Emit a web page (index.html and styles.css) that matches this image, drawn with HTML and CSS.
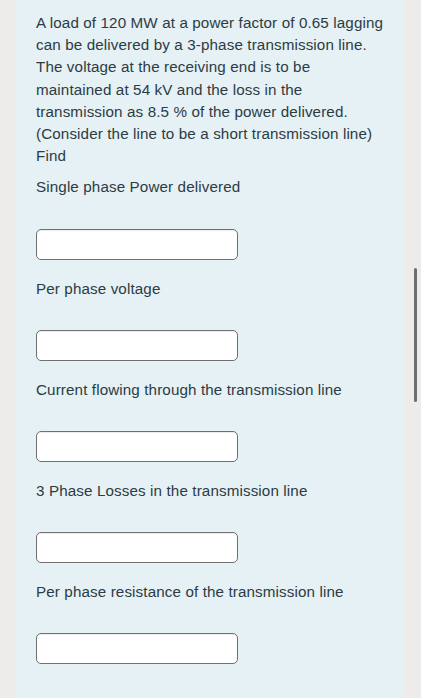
FILE: index.html
```html
<!DOCTYPE html>
<html lang="en">
<head>
<meta charset="utf-8">
<title>Question</title>
<link rel="stylesheet" href="styles.css">
</head>
<body>
<div class="page">
  <div class="panel">
    <p class="question">A load of 120 MW at a power factor of 0.65 lagging can be delivered by a 3-phase transmission line. The voltage at the receiving end is to be maintained at 54 kV and the loss in the transmission as 8.5 % of the power delivered.<br>(Consider the line to be a short transmission line)<br>Find</p>
    <div class="field">
      <label class="label">Single phase Power delivered</label>
      <input class="answer" type="text">
    </div>
    <div class="field">
      <label class="label">Per phase voltage</label>
      <input class="answer" type="text">
    </div>
    <div class="field">
      <label class="label">Current flowing through the transmission line</label>
      <input class="answer" type="text">
    </div>
    <div class="field">
      <label class="label">3 Phase Losses in the transmission line</label>
      <input class="answer" type="text">
    </div>
    <div class="field">
      <label class="label">Per phase resistance of the transmission line</label>
      <input class="answer" type="text">
    </div>
  </div>
  <div class="scrollbar"></div>
</div>
</body>
</html>
```
FILE: styles.css
```css
html, body {
  margin: 0;
  padding: 0;
  background: #ffffff;
}
body {
  font-family: "Liberation Sans", Arial, sans-serif;
  font-size: 15.2px;
  letter-spacing: 0.12px;
  color: #2d3b45;
}
.page {
  position: relative;
  height: 698px;
  background: #edecea;
  padding: 0 17px 0 16px;
  overflow: hidden;
}
.panel {
  height: 698px;
  box-sizing: border-box;
  background: #e5f1f4;
  padding: 12px 20px 0 20px;
}
.question {
  margin: 0 0 9px 0;
  line-height: 22.2px;
}
.field {
  display: flex;
  flex-direction: column;
  align-items: flex-start;
  padding-bottom: 18px;
}
.label {
  line-height: 22.2px;
  margin-bottom: 30px;
}
.answer {
  width: 202px;
  height: 31px;
  box-sizing: border-box;
  margin: 0;
  border: 1px solid #707070;
  border-radius: 5px;
  background: #ffffff;
  box-shadow: inset 0 1px 1px rgba(0,0,0,0.08);
  font: inherit;
  padding: 0 8px;
}
.scrollbar {
  position: absolute;
  left: 414px;
  top: 268px;
  width: 2.5px;
  height: 134px;
  border-radius: 2px;
  background: #6e6e6e;
}
```
